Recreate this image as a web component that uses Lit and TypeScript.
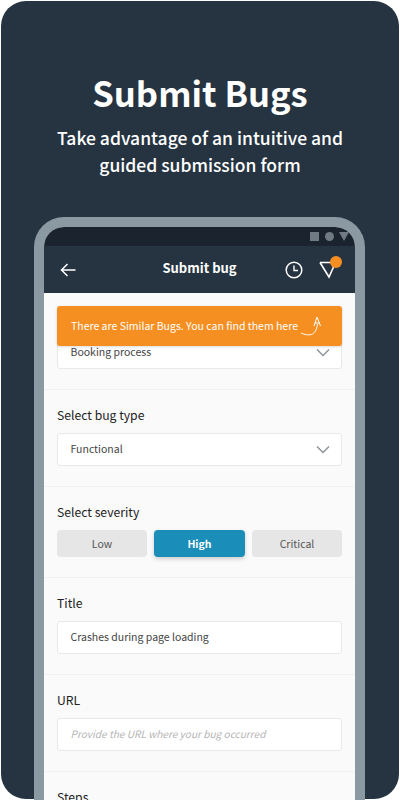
import { LitElement, html, css, svg } from "lit";
import { customElement } from "lit/decorators.js";

const chevron = svg`<svg class="chev" width="14" height="9" viewBox="0 0 14 9"><path d="M1 1.5 L7 7.5 L13 1.5" fill="none" stroke="#8d949b" stroke-width="1.5"/></svg>`;

@customElement("app-root")
export class AppRoot extends LitElement {
  static styles = css`
    :host { display: block; width: 400px; height: 800px; overflow: hidden; background: #fff;
      font-family: "Noto Sans CJK JP", "Noto Sans", sans-serif; }
    .card { box-sizing: border-box; width: 398px; height: 798px; margin: 1px; border-radius: 25px; background: #263442;
      display: flex; flex-direction: column; align-items: center; overflow: visible; }
    h1 { margin: 68px 0 0; font-size: 34.6px; line-height: 46px; font-weight: 700; color: #fff; }
    .sub { margin: 9px 0 0; font-size: 17.5px; line-height: 27px; font-weight: 500; color: #fff; text-align: center; }
    .phone { box-sizing: border-box; flex: none; width: 331px; height: 600px; margin: 39px 0 0 -1px; border: 10px solid #8a99a2; border-bottom: 0;
      border-radius: 30px 30px 0 0; overflow: hidden; position: relative; background: #fafafa; }
    .status { height: 19px; background: #1a232e; display: flex; justify-content: flex-end; align-items: center; gap: 6px; padding-right: 6px; }
    .sq { width: 9px; height: 9px; background: #6f7a82; }
    .dot { width: 9px; height: 9px; border-radius: 50%; background: #6f7a82; }
    .tri { width: 0; height: 0; margin-left: -1px; border-left: 5px solid transparent; border-right: 5px solid transparent; border-top: 9px solid #6f7a82; }
    .bar { height: 47px; background: #263442; display: flex; align-items: center; color: #fff; position: relative; }
    .back { margin-left: 16px; display: block; }
    .title { position: absolute; left: 0; right: 0; text-align: center; font-size: 13px; font-weight: 700; top: 12px; line-height: 20px; }
    .clock { position: absolute; left: 241px; top: 15px; }
    .filter { position: absolute; left: 275px; top: 15px; }
    .badge { position: absolute; left: 286px; top: 10px; width: 12px; height: 12px; border-radius: 50%; background: #f68f22; }
    .toast { position: absolute; left: 13px; top: 79px; width: 285px; height: 40px; box-sizing: border-box; background: #f68f22; border-radius: 3px;
      color: #fff; font-size: 10.5px; line-height: 39px; padding-left: 14px; box-shadow: 0 1px 3px rgba(0,0,0,.15); z-index: 2; }
    .arrow { position: absolute; left: 243px; top: 9px; }
    .section { padding: 16px 13px 20px; border-bottom: 1px solid #f1f1f1; }
    .first { padding-top: 43px; }
    label { display: block; font-size: 12.2px; line-height: 18px; color: #222; margin-bottom: 9px; }
    .field { box-sizing: border-box; height: 33px; background: #fff; border: 1px solid #e9e9e9; border-radius: 3px; display: flex; align-items: center; justify-content: space-between;
      padding: 0 11px 2px 12.5px; font-size: 10.5px; color: #444; }
    .chev { margin-top: 2px; }
    .ph { font-style: italic; color: #b5b5b5; font-size: 10.1px; }
    .sev { display: grid; grid-template-columns: 90px 91px 90px; column-gap: 7px; }
    .sev div { height: 27px; border-radius: 4px; background: #e6e6e6; color: #555; font-size: 10.5px; display: flex; align-items: center; justify-content: center; }
    .sev .on { background: #1a8db8; color: #fff; font-weight: 700; box-shadow: 0 2px 4px rgba(0,0,0,.18); }
  `;
  render() {
    return html`<div class="card">
      <h1>Submit Bugs</h1>
      <p class="sub">Take advantage of an intuitive and<br>guided submission form</p>
      <div class="phone">
        <div class="status"><span class="sq"></span><span class="dot"></span><span class="tri"></span></div>
        <div class="bar">
          <svg class="back" width="16" height="14" viewBox="0 0 16 14"><path d="M15.5 7 H1.5 M7.5 1 L1.5 7 L7.5 13" fill="none" stroke="#fff" stroke-width="1.5"/></svg>
          <div class="title">Submit bug</div>
          <svg class="clock" width="18" height="18" viewBox="0 0 18 18"><circle cx="9" cy="9" r="7.8" fill="none" stroke="#fff" stroke-width="1.5"/><path d="M9 4.5 V9.5 H13" fill="none" stroke="#fff" stroke-width="1.4"/></svg>
          <svg class="filter" width="18" height="18" viewBox="0 0 18 18"><path d="M1 1.5 H13 M1 1.5 L10 16 L15 5" fill="none" stroke="#fff" stroke-width="1.6"/></svg>
          <span class="badge"></span>
        </div>
        <div class="toast">There are Similar Bugs. You can find them here
          <svg class="arrow" width="22" height="24" viewBox="0 0 22 24"><path d="M1 18 C8 21 16 22 17.5 9 M14 11 L17 2 L20.5 11 M15 8 H20" fill="none" stroke="#fff" stroke-width="1"/></svg>
        </div>
        <div class="section first"><div class="field">Booking process ${chevron}</div></div>
        <div class="section"><label>Select bug type</label><div class="field">Functional ${chevron}</div></div>
        <div class="section"><label>Select severity</label>
          <div class="sev"><div>Low</div><div class="on">High</div><div>Critical</div></div></div>
        <div class="section"><label>Title</label><div class="field">Crashes during page loading</div></div>
        <div class="section"><label>URL</label><div class="field ph">Provide the URL where your bug occurred</div></div>
        <div class="section"><label>Steps</label></div>
      </div>
    </div>`;
  }
}
